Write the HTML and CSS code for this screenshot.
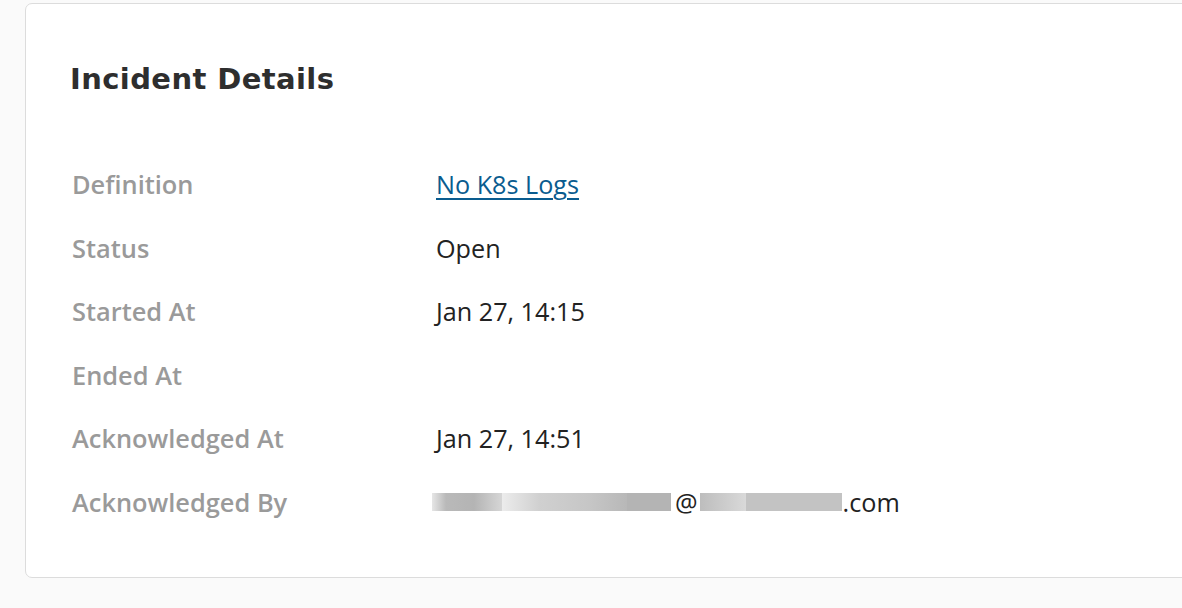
FILE: index.html
```html
<!DOCTYPE html>
<html>
<head>
<meta charset="utf-8">
<link rel="stylesheet" href="styles.css">
</head>
<body>
<section class="card">
  <h2 class="title">Incident Details</h2>
  <dl class="details">
    <div class="row"><dt>Definition</dt><dd><a href="#" class="link">No K8s Logs</a></dd></div>
    <div class="row"><dt>Status</dt><dd>Open</dd></div>
    <div class="row"><dt>Started At</dt><dd>Jan 27, 14:15</dd></div>
    <div class="row"><dt>Ended At</dt><dd></dd></div>
    <div class="row"><dt>Acknowledged At</dt><dd>Jan 27, 14:51</dd></div>
    <div class="row"><dt>Acknowledged By</dt><dd class="email"><span class="blur blur-a"></span><span class="blur blur-b"></span><span class="blur blur-c"></span><span class="at">@</span><span class="blur blur-d"></span><span class="blur blur-e"></span>.com</dd></div>
  </dl>
</section>
</body>
</html>
```
FILE: styles.css
```css
html, body {
  margin: 0;
  background: #fafafa;
  overflow: hidden;
}
body {
  padding: 3px 0 0 25px;
  font-family: "Open Sans", "Noto Sans", sans-serif;
}
.card {
  width: 1240px;
  height: 575px;
  box-sizing: border-box;
  background: #fff;
  border: 1px solid #dcdcdc;
  border-radius: 7px;
  padding: 55px 0 0 44px;
}
.title {
  margin: 0;
  font-family: "DejaVu Sans", sans-serif;
  font-weight: 700;
  font-size: 29px;
  line-height: 40px;
  color: #2e2e2e;
  letter-spacing: 0.4px;
}
.details {
  margin: 68px 0 0 2px;
}
.row {
  display: flex;
  height: 63.6px;
  align-items: flex-start;
}
dt {
  width: 364px;
  font-weight: 600;
  font-size: 25.4px;
  line-height: 34px;
  color: #9a9a9a;
  margin: 0;
}
dd {
  margin: 0;
  font-size: 25.2px;
  line-height: 34px;
  color: #222;
  display: flex;
  align-items: center;
}
.link {
  color: #0a5c8f;
  text-decoration: underline;
  text-underline-offset: 4px;
  text-decoration-thickness: 1.5px;
}
.blur {
  display: inline-block;
  height: 18px;
}
.blur-a { width: 70px; background: linear-gradient(90deg, #e6e6e6, #b9b9b9 20%, #b4b4b4 60%, #d6d6d6); margin-left: -4px; }
.blur-b { width: 125px; background: linear-gradient(90deg, #ececec, #d0d0d0 30%, #c6c6c6 70%, #b8b8b8); }
.blur-c { width: 44px; background: #b4b4b4; }
.at { margin: 0 2px 0 4px; }
.blur-d { width: 46px; background: linear-gradient(90deg, #bdbdbd, #d9d9d9); }
.blur-e { width: 96px; background: #c3c3c3; margin-right: 1px; }
```
